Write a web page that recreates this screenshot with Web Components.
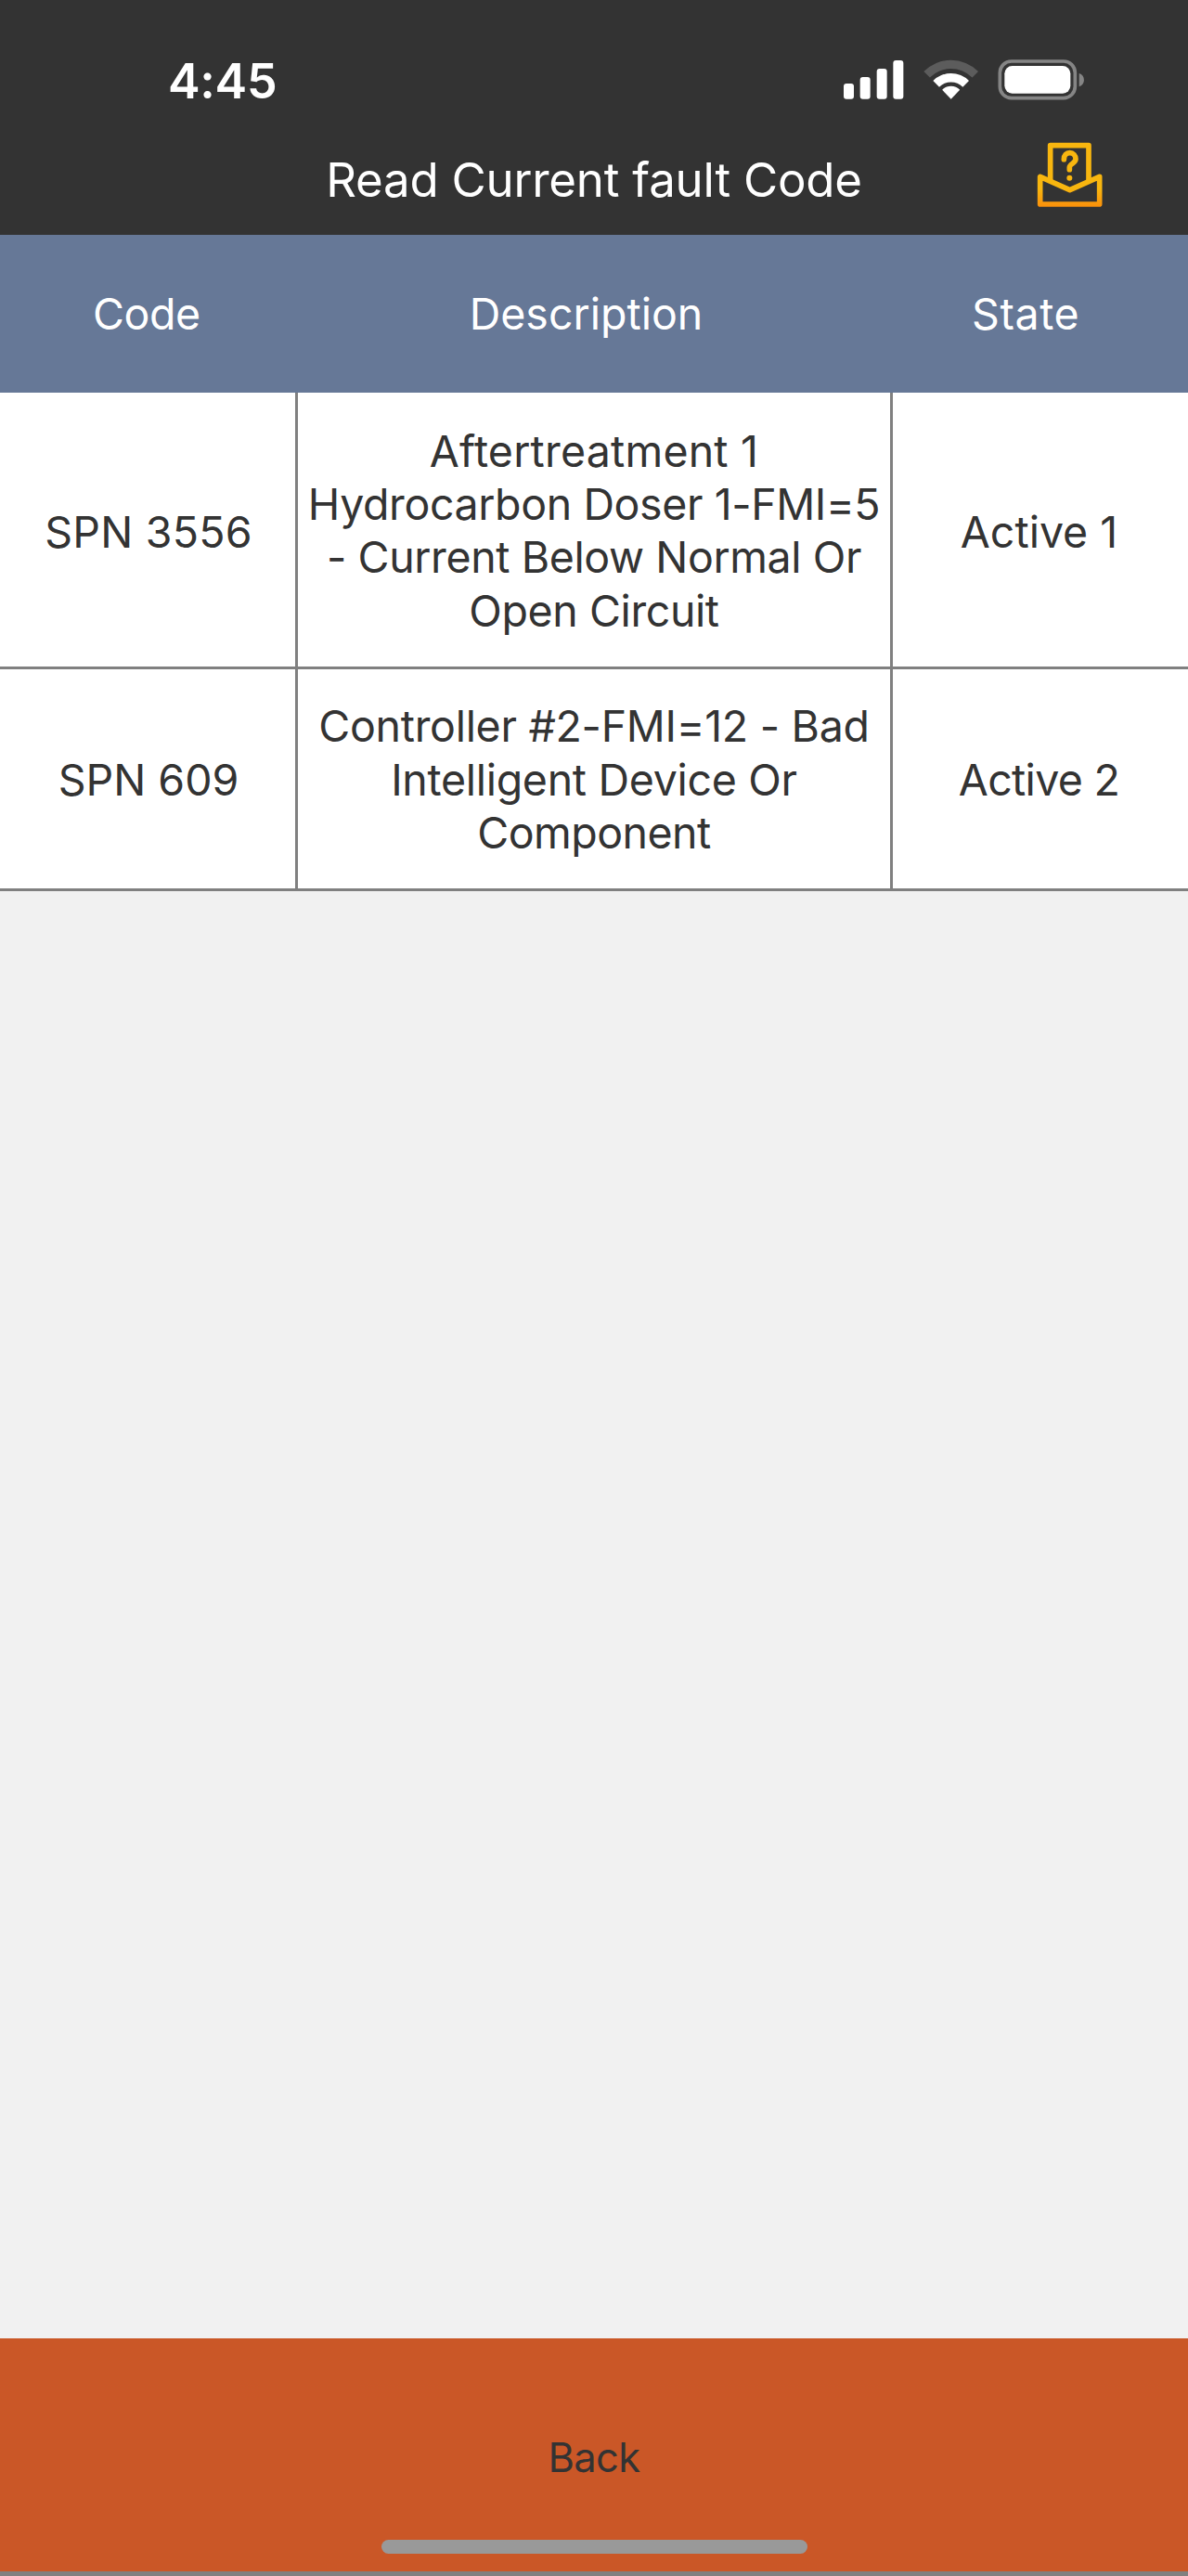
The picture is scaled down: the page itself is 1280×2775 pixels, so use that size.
<!DOCTYPE html>
<html lang="en">
<head>
<meta charset="utf-8">
<title>Read Current fault Code</title>
<style>
  body {
    margin: 0;
    background: #f1f1f1;
    font-family: Inter, "Liberation Sans", sans-serif;
    color: #333;
  }
</style>
</head>
<body>
<fault-screen></fault-screen>

<script>
class StatusBar extends HTMLElement {
  constructor() {
    super();
    this.attachShadow({ mode: "open" });
    this.shadowRoot.innerHTML = `
      <style>
        :host {
          display: flex;
          align-items: center;
          justify-content: space-between;
          box-sizing: border-box;
          height: 134px;
          padding: 40px 90px 0 181px;
          color: #fff;
        }
        .time {
          margin-top: 2px;
          font-size: 52px;
          font-weight: 600;
          line-height: 1;
          letter-spacing: -0.3px;
        }
        svg { display: block; }
      </style>
      <span class="time"><slot></slot></span>
      <svg width="300" height="70" viewBox="0 6 900 210">
        <g fill="#fff">
          <rect x="57" y="120" width="33" height="50" rx="9"/>
          <rect x="110" y="99" width="33" height="71" rx="9"/>
          <rect x="164" y="72" width="33" height="98" rx="9"/>
          <rect x="217" y="45" width="33" height="125" rx="9"/>
        </g>
        <path d="M316 81 A124 124 0 0 1 492 81 L472.500 100.500 A97 97 0 0 0 335.500 100.500 Z" fill="#5c5c5c"/>
        <path d="M346 111 A82 82 0 0 1 462 111 L442 131 A54 54 0 0 0 366 131 Z" fill="#fff"/>
        <path d="M375.500 140.500 A40 40 0 0 1 432.500 140.500 L404 170 Z" fill="#fff"/>
        <rect x="562" y="48" width="243" height="119" rx="37" fill="none" stroke="#858585" stroke-width="11"/>
        <rect x="577" y="63" width="213" height="89" rx="25" fill="#fff"/>
        <path d="M818 87 C839 92 839 125 818 130 Z" fill="#858585"/>
      </svg>
    `;
  }
}

class NavBar extends HTMLElement {
  constructor() {
    super();
    this.attachShadow({ mode: "open" });
    this.shadowRoot.innerHTML = `
      <style>
        :host {
          display: grid;
          grid-template-columns: 180px 1fr 180px;
          align-items: center;
          height: 119px;
          color: #fff;
        }
        .title {
          grid-column: 2;
          font-size: 51px;
          line-height: 1;
          letter-spacing: -0.23px;
          text-align: center;
          white-space: nowrap;
        }
        svg { display: block; align-self: start; margin-top: 6px; }
      </style>
      <span class="title"><slot></slot></span>
      <svg width="100" height="100" viewBox="0 0 300 300">
        <defs>
          <linearGradient id="amber" gradientUnits="userSpaceOnUse" x1="0" y1="190" x2="0" y2="250">
            <stop offset="0" stop-color="#f8b60f"/>
            <stop offset="1" stop-color="#fa8f0b"/>
          </linearGradient>
        </defs>
        <g fill="none" stroke="url(#amber)" stroke-width="17" stroke-linejoin="round">
          <path d="M62 151 V240 H254 V151 L158 194 Z"/>
          <path d="M95 162 V50 H219 V162"/>
          <path d="M139 95 C139 82 147 74 158 74 C169 74 177 83 177 94 C177 108 157 109 157 121 V128" stroke-linecap="round"/>
        </g>
        <circle cx="157" cy="155" r="9" fill="#f8b60f"/>
      </svg>
    `;
  }
}

class TableHead extends HTMLElement {
  constructor() {
    super();
    this.attachShadow({ mode: "open" });
    this.shadowRoot.innerHTML = `
      <style>
        :host {
          display: grid;
          grid-template-columns: 1fr 2fr 1fr;
          align-items: center;
          box-sizing: border-box;
          height: 170px;
          padding-right: 17px;
          background: #667897;
          color: #fff;
          font-size: 46.5px;
          line-height: 57px;
          text-align: center;
        }
      </style>
      <slot></slot>
    `;
  }
}

class FaultRow extends HTMLElement {
  constructor() {
    super();
    this.attachShadow({ mode: "open" });
    this.shadowRoot.innerHTML = `
      <style>
        :host {
          display: grid;
          grid-template-columns: 318px 1fr 318px;
          gap: 3px;
          background: #808080;
          border-bottom: 3px solid #808080;
          font-size: 46.5px;
          line-height: 57.2px;
        }
        div {
          display: flex;
          align-items: center;
          justify-content: center;
          padding: 35px 0 31px;
          background: #fff;
          text-align: center;
          white-space: nowrap;
        }
        .code { padding: 36.4px 0 29.6px 2px; }
        .state { padding: 36.4px 3px 29.6px 0; }
        :host([compact]) div { padding-top: 33.5px; padding-bottom: 31px; }
      </style>
      <div class="code"><slot name="code"></slot></div>
      <div><slot name="description"></slot></div>
      <div class="state"><slot name="state"></slot></div>
    `;
  }
}

class BackBar extends HTMLElement {
  constructor() {
    super();
    this.attachShadow({ mode: "open" });
    this.shadowRoot.innerHTML = `
      <style>
        :host {
          display: flex;
          flex-direction: column;
          align-items: center;
          box-sizing: border-box;
          height: 256px;
          padding-top: 98px;
          background: #ca5727;
          border-bottom: 5px solid #808080;
        }
        button {
          border: 0;
          padding: 0;
          background: none;
          font: inherit;
          color: #333;
          font-size: 43.5px;
          line-height: 60px;
          letter-spacing: -0.7px;
        }
        .home {
          width: 459px;
          height: 15px;
          margin-top: 59px;
          border-radius: 8px;
          background: #999;
        }
      </style>
      <button><slot></slot></button>
      <div class="home"></div>
    `;
  }
}

class FaultScreen extends HTMLElement {
  constructor() {
    super();
    this.attachShadow({ mode: "open" });
    this.shadowRoot.innerHTML = `
      <style>
        :host {
          display: flex;
          flex-direction: column;
          height: 2775px;
        }
        header { background: #333; }
        main { flex: 1; }
        .tight { letter-spacing: -0.4px; }
        .snug { letter-spacing: -0.3px; }
        .loose { letter-spacing: 0.2px; }
      </style>
      <header>
        <status-bar>4:45</status-bar>
        <nav-bar>Read Current fault Code</nav-bar>
      </header>
      <main>
        <table-head>
          <span class="tight">Code</span>
          <span>Description</span>
          <span style="letter-spacing: 0.6px">State</span>
        </table-head>
        <fault-row>
          <span slot="code" class="loose">SPN 3556</span>
          <span slot="description" class="tight"><span class="loose">Aftertreatment 1</span><br>Hydrocarbon Doser 1-FMI=5<br>- Current Below Normal Or<br>Open Circuit</span>
          <span slot="state">Active 1</span>
        </fault-row>
        <fault-row compact>
          <span slot="code">SPN 609</span>
          <span slot="description" class="snug">Controller #2-FMI=12 - Bad<br>Intelligent Device Or<br><span style="letter-spacing: -0.55px">Component</span></span>
          <span slot="state" style="letter-spacing: -0.7px">Active 2</span>
        </fault-row>
      </main>
      <back-bar>Back</back-bar>
    `;
  }
}

customElements.define("status-bar", StatusBar);
customElements.define("nav-bar", NavBar);
customElements.define("table-head", TableHead);
customElements.define("fault-row", FaultRow);
customElements.define("back-bar", BackBar);
customElements.define("fault-screen", FaultScreen);
</script>
</body>
</html>
